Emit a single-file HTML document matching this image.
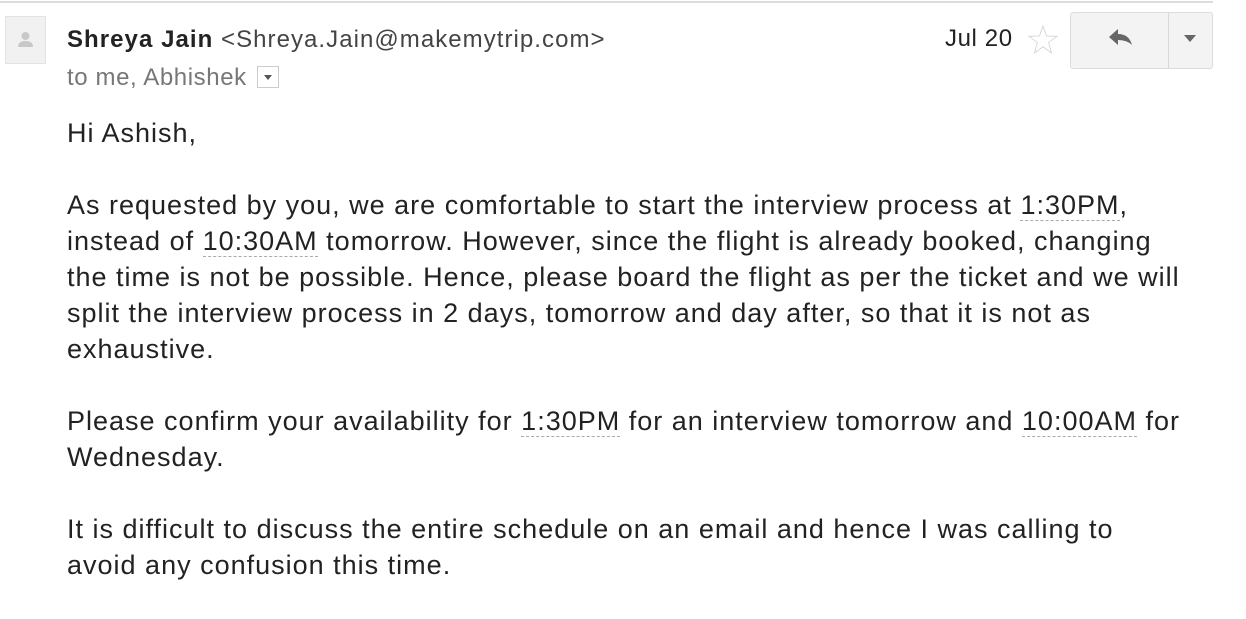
<!DOCTYPE html>
<html><head><style>
body{margin:0;width:1246px;height:600px;background:#fff;font-family:"Liberation Sans",Arial,sans-serif;position:relative;overflow:hidden;color:#222}
.top{position:absolute;left:0;top:1px;width:1213px;height:2px;background:#dcdcdc}
.av{position:absolute;left:5px;top:16px;width:39px;height:46px;background:#f1f1f1;border:1px solid #e3e3e3}
.name{position:absolute;left:67px;top:26px;font-size:24px;letter-spacing:1.05px;white-space:nowrap}
.name b{color:#222}
.name span{color:#444}
.to{position:absolute;left:67px;top:64px;font-size:24px;letter-spacing:0.6px;color:#777;white-space:nowrap}
.dd{display:inline-block;width:22px;height:22px;border:1px solid #ccc;vertical-align:-3px;margin-left:10px;box-sizing:border-box;position:relative}
.dd:after{content:"";position:absolute;left:6px;top:8px;border-left:4px solid transparent;border-right:4px solid transparent;border-top:5px solid #555}
.date{position:absolute;left:945px;top:25px;font-size:24px;letter-spacing:0.6px;color:#222}
.btn{position:absolute;left:1070px;top:12px;width:143px;height:57px;background:#f3f3f3;border:1px solid #dcdcdc;border-radius:3px;box-sizing:border-box}
.btn .div{position:absolute;left:97px;top:0;width:1px;height:100%;background:#d8d8d8}
.body{position:absolute;left:67px;top:115px;font-size:27px;letter-spacing:1px;line-height:36px;color:#222;width:1170px;white-space:nowrap}
.body p{margin:0 0 36px 0}
u{text-decoration:none;border-bottom:1px dashed #aaa}
</style></head><body>
<div class="top"></div>
<div class="av"><svg width="39" height="46" viewBox="0 0 39 46"><circle cx="19.5" cy="19" r="4" fill="#c8c8c8"/><path d="M12 30 q0-6 7.5-6 q7.5 0 7.5 6z" fill="#c8c8c8"/></svg></div>
<div class="name"><b>Shreya Jain</b> <span>&lt;Shreya.Jain@makemytrip.com&gt;</span></div>
<div class="to">to me, Abhishek<span class="dd"></span></div>
<div class="date">Jul 20</div>
<svg style="position:absolute;left:1027px;top:24px" width="32" height="32" viewBox="0 0 32 32"><path d="M16 2 L19.5 12 L30 12.3 L21.6 18.6 L24.6 29 L16 22.8 L7.4 29 L10.4 18.6 L2 12.3 L12.5 12 Z" fill="none" stroke="#d0d0d0" stroke-width="0.8"/></svg>
<div class="btn"><div class="div"></div>
<svg style="position:absolute;left:36px;top:14px" width="28" height="26" viewBox="0 0 28 26"><path d="M2 10 L11 2 L11 7 Q22 7 25 18 Q20 13 11 13 L11 18 Z" fill="#666"/></svg>
<svg style="position:absolute;left:113px;top:22px" width="12" height="8"><path d="M0 0 L12 0 L6 7Z" fill="#666"/></svg>
</div>
<div class="body">
<p>Hi Ashish,</p>
<p>As requested by you, we are comfortable to start the interview process at <u>1:30PM</u>,<br>instead of <u>10:30AM</u> tomorrow. However, since the flight is already booked, changing<br>the time is not be possible. Hence, please board the flight as per the ticket and we will<br>split the interview process in 2 days, tomorrow and day after, so that it is not as<br>exhaustive.</p>
<p>Please confirm your availability for <u>1:30PM</u> for an interview tomorrow and <u>10:00AM</u> for<br>Wednesday.</p>
<p>It is difficult to discuss the entire schedule on an email and hence I was calling to<br>avoid any confusion this time.</p>
</div>
</body></html>
